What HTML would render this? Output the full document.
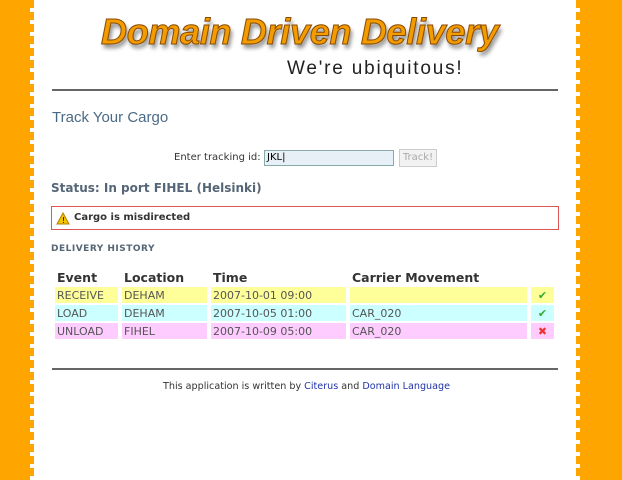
<!DOCTYPE html>
<html><head><style>
body{margin:0;width:622px;height:480px;background:#fff;font-family:"DejaVu Sans","Liberation Sans",sans-serif;position:relative;overflow:hidden}
.l{position:absolute;left:0;top:0;width:30px;height:480px;background:#ffa500}
.lt{position:absolute;left:30px;top:0;width:4px;height:480px;background:repeating-linear-gradient(#ffa500 0 8px,transparent 8px 12px)}
.r{position:absolute;left:580px;top:0;width:42px;height:480px;background:#ffa500}
.rt{position:absolute;left:576px;top:0;width:4px;height:480px;background:repeating-linear-gradient(#ffa500 0 8px,transparent 8px 12px)}
.a{position:absolute;white-space:nowrap}
.logo{left:101px;top:11px;font-family:"Liberation Sans",sans-serif;font-weight:bold;font-style:italic;font-size:36px;color:#f39c00;-webkit-text-stroke:1px #8a4a00;text-shadow:2px 4px 4px #888;letter-spacing:-0.3px}
.hr{position:absolute;left:52px;width:506px;height:2px;background:#666}
td{font-size:11px;padding:0 2px;height:16px;color:#555}
table{border-spacing:4px 2px}
</style></head><body>
<div class="l"></div><div class="lt"></div><div class="r"></div><div class="rt"></div>
<div class="a logo">Domain Driven Delivery</div>
<div class="a" style="left:287px;top:58px;font-size:19px;color:#222;font-family:'Liberation Sans',sans-serif;letter-spacing:1.8px">We're ubiquitous!</div>
<div class="hr" style="top:89px"></div>
<div class="a" style="left:52px;top:109px;font-size:15px;color:#4b6a85;font-family:'Liberation Sans',sans-serif">Track Your Cargo</div>
<div class="a" style="left:174px;top:152px;font-size:10px;color:#333">Enter tracking id:</div>
<div class="a" style="left:264px;top:150px;width:126px;height:14px;border:1px solid #8aa;background:#e6f0f6;font-size:10px;line-height:14px;padding-left:2px;color:#000">JKL|</div>
<div class="a" style="left:399px;top:149px;width:36px;height:16px;border:1px solid #ccc;background:#f2f2f2;font-size:10px;line-height:16px;text-align:center;color:#aaa">Track!</div>
<div class="a" style="left:51px;top:181px;font-size:12px;font-weight:bold;color:#556677">Status: In port FIHEL (Helsinki)</div>
<div class="a" style="left:51px;top:206px;width:506px;height:22px;border:1px solid #d55"></div>
<svg class="a" style="left:56px;top:212px" width="14" height="13"><path d="M7 1L13 12H1Z" fill="#f5c400" stroke="#b08000"/><text x="6" y="11" font-size="8" fill="#000">!</text></svg>
<div class="a" style="left:74px;top:212px;font-size:10px;font-weight:bold;color:#333">Cargo is misdirected</div>
<div class="a" style="left:51px;top:244px;font-size:9px;font-weight:bold;color:#556677;letter-spacing:0.5px">DELIVERY HISTORY</div>
<table class="a" style="left:51px;top:267px">
<tr><td style="width:59px;font-size:12.5px;font-weight:bold;color:#333">Event</td><td style="width:81px;font-size:12.5px;font-weight:bold;color:#333">Location</td><td style="width:131px;font-size:12.5px;font-weight:bold;color:#333">Time</td><td style="width:173px;font-size:12.5px;font-weight:bold;color:#333">Carrier Movement</td><td style="width:19px"></td></tr>
<tr style="background:#ffff99"><td>RECEIVE</td><td>DEHAM</td><td>2007-10-01 09:00</td><td></td><td style="color:#3a3;font-weight:bold;text-align:center">✔</td></tr>
<tr style="background:#ccffff"><td>LOAD</td><td>DEHAM</td><td>2007-10-05 01:00</td><td>CAR_020</td><td style="color:#3a3;font-weight:bold;text-align:center">✔</td></tr>
<tr style="background:#ffccff"><td>UNLOAD</td><td>FIHEL</td><td>2007-10-09 05:00</td><td>CAR_020</td><td style="color:#e33;font-weight:bold;text-align:center">✖</td></tr>
</table>
<div class="hr" style="top:368px"></div>
<div class="a" style="left:163px;top:381px;font-size:9.6px;color:#333">This application is written by <span style="color:#2233aa">Citerus</span> and <span style="color:#2233aa">Domain Language</span></div>
</body></html>
